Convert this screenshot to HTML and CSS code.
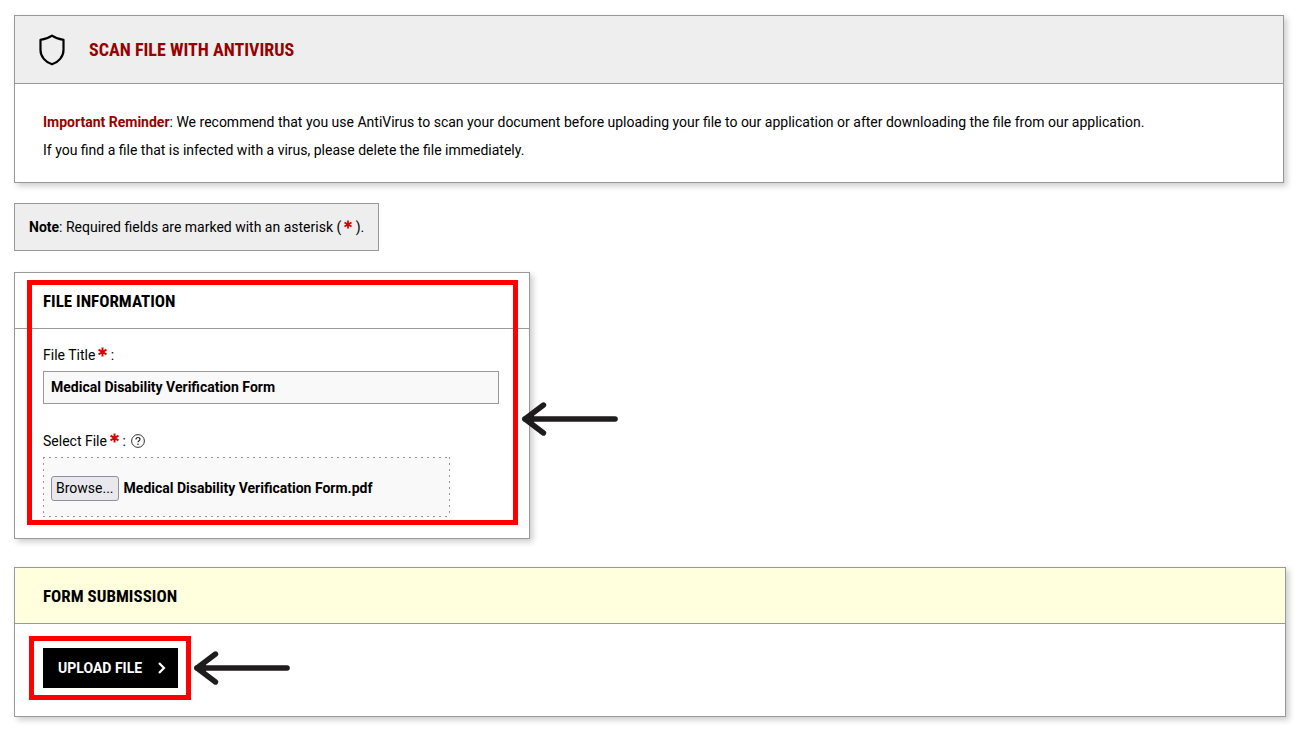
FILE: index.html
```html
<!DOCTYPE html>
<html lang="en">
<head>
<meta charset="utf-8">
<title>Upload File</title>
<link rel="stylesheet" href="styles.css">
</head>
<body>
<svg class="symbols" aria-hidden="true">
  <symbol id="asterisk" viewBox="0 0 10 10"><path d="M5 0v10M0.6 2.400l8.800 5.200M9.400 2.400l-8.800 5.200" fill="none" stroke="currentColor" stroke-width="2.200"/></symbol>
  <symbol id="arrow" viewBox="0 0 96 34"><path d="M3 17h90" fill="none" stroke="#1e1c1d" stroke-width="5.600" stroke-linecap="round"/><path d="M21.500 3L3 17l18.500 14" fill="none" stroke="#1e1c1d" stroke-width="5.400" stroke-linecap="round" stroke-linejoin="round"/><path d="M3 17l9-5v10z" fill="#1e1c1d"/></symbol>
</svg>
<main class="page">
  <section class="panel notice">
    <header class="panel-head notice-head">
      <svg class="shield" viewBox="0 0 26 32" aria-hidden="true"><path d="M13 1.700C10 3.900 6 5.300 1.500 5.900V16C1.500 22.500 6.500 28.500 13 30.300C19.500 28.500 24.500 22.500 24.500 16V5.900C20 5.300 16 3.900 13 1.700Z" fill="none" stroke="#000" stroke-width="2.200" stroke-linejoin="round"/></svg>
      <h1 class="notice-title">SCAN FILE WITH ANTIVIRUS</h1>
    </header>
    <div class="notice-body">
      <p><strong class="alert">Important Reminder</strong>: We recommend that you use AntiVirus to scan your document before uploading your file to our application or after downloading the file from our application.</p>
      <p>If you find a file that is infected with a virus, please delete the file immediately.</p>
    </div>
  </section>

  <p class="note"><strong>Note</strong>: Required fields are marked with an asterisk (<svg class="required required-small" aria-hidden="true"><use href="#asterisk"/></svg> ).</p>

  <form class="form">
    <section class="panel file-panel">
      <header class="panel-head"><h2 class="panel-title">FILE INFORMATION</h2></header>
      <div class="fields">
        <div class="field">
          <label class="field-label" for="title">File Title<svg class="required" aria-hidden="true"><use href="#asterisk"/></svg> :</label>
          <input class="text-input" id="title" type="text" value="Medical Disability Verification Form">
        </div>
        <div class="field">
          <div class="label-row">
            <label class="field-label" for="file">Select File<svg class="required" aria-hidden="true"><use href="#asterisk"/></svg> :</label>
            <button class="help" type="button" aria-label="Help"><svg viewBox="0 0 14 14" aria-hidden="true"><circle cx="7" cy="7" r="6.400" fill="none" stroke="#333" stroke-width="1"/><path d="M5 5.500C5 4.200 5.900 3.500 7 3.500S9 4.200 9 5.300C9 6.700 7 6.700 7 8.300" fill="none" stroke="#222" stroke-width="1.200"/><circle cx="7" cy="10.200" r=".8" fill="#222"/></svg></button>
          </div>
          <div class="file-drop">
            <span class="browse">Browse...</span>
            <span class="file-name">Medical Disability Verification Form.pdf</span>
            <input class="file-input" id="file" type="file">
          </div>
        </div>
      </div>
      <div class="highlight highlight-file"></div>
      <svg class="arrow arrow-file" aria-hidden="true"><use href="#arrow"/></svg>
    </section>

    <section class="panel">
      <header class="panel-head submit-head"><h2 class="panel-title">FORM SUBMISSION</h2></header>
      <div class="submit-body">
        <div class="submit-wrap">
          <button class="upload" type="submit">UPLOAD FILE<svg class="chevron" viewBox="0 0 8 12" aria-hidden="true"><path d="M1 1l5 5-5 5" fill="none" stroke="#fff" stroke-width="2.200"/></svg></button>
          <div class="highlight highlight-upload"></div>
          <svg class="arrow arrow-upload" aria-hidden="true"><use href="#arrow"/></svg>
        </div>
      </div>
    </section>
  </form>
</main>
</body>
</html>
```
FILE: styles.css
```css
* { box-sizing: border-box; }
body { margin: 0; background: #fff; color: #000; font: 14px/20px Roboto, "Liberation Sans", sans-serif; }
h1, h2, p { margin: 0; }
strong { font-weight: 700; }
.symbols { position: absolute; width: 0; height: 0; }
.page { padding: 15px 12px 30px 14px; }
.panel { position: relative; background: #fff; border: 1px solid #999; box-shadow: 3px 3px 6px rgba(0, 0, 0, .2); }
.panel-head { display: flex; align-items: center; padding: 18px 28px 17px; border-bottom: 1px solid #999; }
.panel-title { font: 700 17px/20px "Roboto Condensed", Roboto, sans-serif; }

.notice { margin-right: 2px; }
.notice-head { gap: 24px; padding: 18px 24px 17px; background: #eee; }
.shield { width: 26px; height: 32px; }
.notice-title { color: #900; font: 700 18px/32px "Roboto Condensed", Roboto, sans-serif; }
.notice-body { padding: 24px 28px 18px; line-height: 28px; }
.alert { color: #900; }

.note { width: fit-content; margin: 20px 0 21px; padding: 13px 14px; border: 1px solid #999; background: #eee; }
.required { width: 9px; height: 10px; margin-left: 3px; color: #d90000; vertical-align: 3px; }
.required-small { width: 8px; height: 9px; }

.form { display: flex; flex-direction: column; gap: 28px; }
.file-panel { width: 100%; max-width: 516px; }
.fields { display: flex; flex-direction: column; gap: 27px; padding: 16px 30px 21px 28px; }
.field { display: flex; flex-direction: column; gap: 6px; }
.label-row { display: flex; align-items: center; gap: 5px; }
.text-input { width: 100%; height: 33px; padding: 0 7px 2px; border: 1px solid #999; border-radius: 0; background: #f9f9f9; color: #000; font: 700 14px/20px Roboto, sans-serif; }
.help { display: flex; padding: 0; border: 0; background: none; }
.help svg { width: 14px; height: 14px; }
.file-drop {
  --dash: #999 0 2px, transparent 2px 6px;
  position: relative; display: flex; align-items: center; gap: 5px;
  max-width: 407px; height: 60px; padding: 2px 8px 0;
  background:
    repeating-linear-gradient(90deg, var(--dash)) top / 100% 1px no-repeat,
    repeating-linear-gradient(90deg, var(--dash)) bottom / 100% 1px no-repeat,
    repeating-linear-gradient(180deg, var(--dash)) left / 1px 100% no-repeat,
    repeating-linear-gradient(180deg, var(--dash)) right / 1px 100% no-repeat,
    #f9f9f9;
}
.browse { padding: 1px 4px; border: 1px solid #8f8f9d; border-radius: 3px; background: #e9e9ed; line-height: 21px; }
.file-name { font-weight: 700; }
.file-input { position: absolute; inset: 0; width: 100%; height: 100%; opacity: 0; }

.submit-head { background: #ffffdd; }
.submit-body { display: flex; padding: 24px 28px 28px; }
.submit-wrap { position: relative; }
.upload { display: flex; align-items: center; gap: 16px; height: 40px; padding: 0 12px 0 15px; border: 0; background: #000; color: #fff; font: 700 14px/20px Roboto, sans-serif; }
.chevron { width: 8px; height: 12px; }

.highlight { position: absolute; border: 5px solid #f00; pointer-events: none; }
.highlight-file { inset: 7px 11px 13px 12px; }
.highlight-upload { inset: -12px -13px -12px -14px; }
.arrow { position: absolute; width: 96px; height: 34px; pointer-events: none; }
.arrow-file { top: 129px; right: -89px; }
.arrow-upload { top: 3px; right: -112px; }
```
